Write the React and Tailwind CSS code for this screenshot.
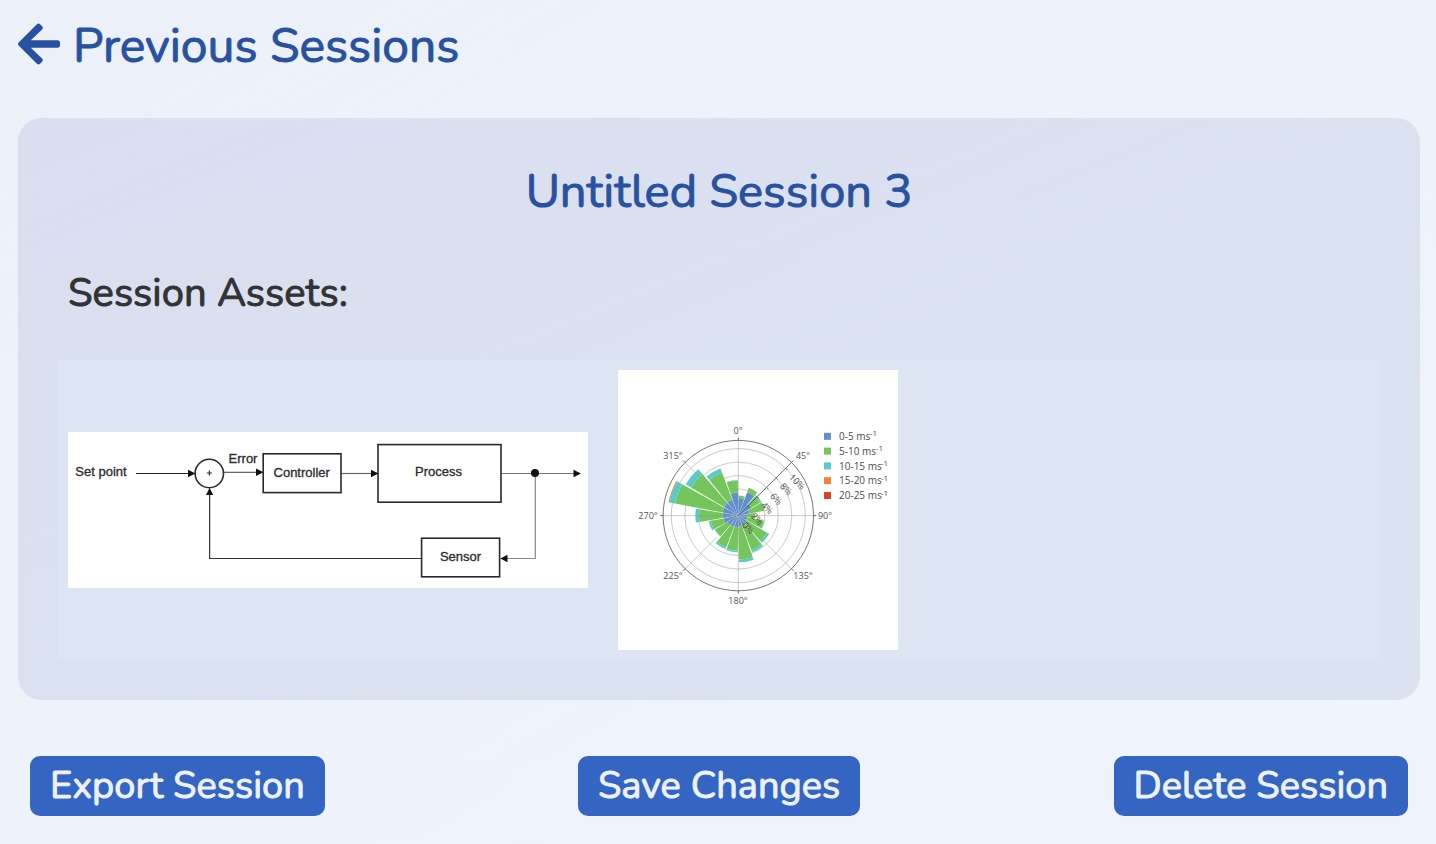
import React from "react";
import { FaArrowLeft } from "react-icons/fa";

const BLUE = "#618fca";
const GREEN = "#74c55b";
const CYAN = "#56cbc9";
const ORANGE = "#f3813a";
const RED = "#d84425";

// Outer radius of each stacked band: blue, green, cyan, orange
const SECTORS = [
  { angle: 10, bands: [17.7, 20] },
  { angle: 30, bands: [25, 29.7] },
  { angle: 50, bands: [15, 25.6, 26.8] },
  { angle: 70, bands: [11.7, 26.3] },
  { angle: 90, bands: [9, 17] },
  { angle: 110, bands: [9, 26, 26.6] },
  { angle: 130, bands: [10, 33.7, 36] },
  { angle: 150, bands: [10.7, 37, 39.3] },
  { angle: 170, bands: [11, 44, 46.7] },
  { angle: 190, bands: [11.7, 35, 36.7] },
  { angle: 210, bands: [12, 33.7, 35.7] },
  { angle: 230, bands: [12.7, 27, 27.6] },
  { angle: 250, bands: [15, 28, 30] },
  { angle: 270, bands: [15.7, 39.3, 43] },
  { angle: 290, bands: [16, 64.3, 70, 71] },
  { angle: 310, bands: [16.7, 55, 61.3] },
  { angle: 330, bands: [17.3, 46, 50.3] },
  { angle: 350, bands: [23, 35, 35.7] },
];

const BAND_COLORS = [BLUE, GREEN, CYAN, ORANGE];
const CX = 120.3;
const CY = 145.6;

function polar(r, deg) {
  const a = (deg * Math.PI) / 180;
  return [CX + r * Math.sin(a), CY - r * Math.cos(a)];
}

function wedge(inner, outer, center) {
  const from = center - 9.2;
  const to = center + 9.2;
  const [x1, y1] = polar(inner, from);
  const [x2, y2] = polar(outer, from);
  const [x3, y3] = polar(outer, to);
  const [x4, y4] = polar(inner, to);
  return `M${x1} ${y1}L${x2} ${y2}A${outer} ${outer} 0 0 1 ${x3} ${y3}L${x4} ${y4}A${inner} ${inner} 0 0 0 ${x1} ${y1}Z`;
}

const DIRECTIONS = [
  { label: "0°", x: 120, y: 64 },
  { label: "45°", x: 185, y: 89 },
  { label: "90°", x: 207, y: 149 },
  { label: "135°", x: 185, y: 209 },
  { label: "180°", x: 120, y: 234 },
  { label: "225°", x: 55, y: 209 },
  { label: "270°", x: 30, y: 149 },
  { label: "315°", x: 55, y: 89 },
];

const PERCENTS = [
  { label: "0%", x: 130, y: 158 },
  { label: "2%", x: 139, y: 149 },
  { label: "4%", x: 149, y: 138 },
  { label: "6%", x: 158, y: 129 },
  { label: "8%", x: 168, y: 119 },
  { label: "10%", x: 179, y: 112 },
];

const LEGEND = [
  { label: "0-5 ms", color: BLUE, supX: 252 },
  { label: "5-10 ms", color: GREEN, supX: 258 },
  { label: "10-15 ms", color: CYAN, supX: 263 },
  { label: "15-20 ms", color: ORANGE, supX: 263 },
  { label: "20-25 ms", color: RED, supX: 263 },
];

function WindRose() {
  return (
    <svg
      viewBox="0 0 280 280"
      role="img"
      aria-label="Wind rose"
      className="h-[280px] w-[280px] shrink-0 bg-white font-['Open_Sans','Noto_Sans',sans-serif]"
    >
      <g fill="none" stroke="#c4c4c4" strokeWidth="0.9">
        {[13.3, 26.7, 40, 53.5, 67].map((r) => (
          <circle key={r} cx={CX} cy={CY} r={r} />
        ))}
      </g>
      {SECTORS.map(({ angle, bands }) =>
        bands.map((r, i) => (
          <path key={`${angle}-${i}`} d={wedge(i ? bands[i - 1] : 0, r, angle)} fill={BAND_COLORS[i]} />
        ))
      )}
      <g stroke="#9a9a9a" strokeOpacity="0.5" strokeWidth="1">
        {[0, 90, 135, 180, 225, 270, 315].map((a) => {
          const [x1, y1] = polar(a % 90 ? 30 : 0, a);
          const [x2, y2] = polar(75, a);
          return <line key={a} x1={x1} y1={y1} x2={x2} y2={y2} />;
        })}
      </g>
      <circle cx={CX} cy={CY} r="75.2" fill="none" stroke="#666" strokeWidth="0.9" />
      <g stroke="#555" strokeWidth="0.9">
        {[0, 45, 90, 135, 180, 225, 270, 315].map((a) => {
          const [x1, y1] = polar(75, a);
          const [x2, y2] = polar(78, a);
          return <line key={a} x1={x1} y1={y1} x2={x2} y2={y2} />;
        })}
        <line x1={CX} y1={CY} x2={CX + 53} y2={CY - 53} />
        {[13.3, 26.7, 40, 53.5, 67].map((r) => {
          const [x, y] = polar(r, 45);
          return <line key={r} x1={x} y1={y} x2={x + 1.6} y2={y + 1.6} />;
        })}
      </g>
      <g fill="#555" fontSize="9" textAnchor="middle">
        {DIRECTIONS.map((d) => (
          <text key={d.label} x={d.x} y={d.y}>
            {d.label}
          </text>
        ))}
      </g>
      <g fill="#444" fontSize="9" textAnchor="middle">
        {PERCENTS.map((p) => (
          <text key={p.label} x={p.x} y={p.y} dy="3" transform={`rotate(45 ${p.x} ${p.y})`}>
            {p.label}
          </text>
        ))}
      </g>
      {LEGEND.map((item, i) => {
        const y = 66.3 + i * 14.8;
        return (
          <g key={item.label} fill="#4c4c4c">
            <rect x="206" y={y - 3.5} width="7" height="7" fill={item.color} />
            <text x="221" y={y + 3.7} fontSize="10">
              {item.label}
            </text>
            <text x={item.supX} y={y} fontSize="8">
              -1
            </text>
          </g>
        );
      })}
    </svg>
  );
}

function ControlLoop() {
  return (
    <svg
      viewBox="0 0 520 156"
      role="img"
      aria-label="Feedback control loop"
      className="h-[156px] w-[520px] shrink-0 bg-white font-['Liberation_Sans',Arial,sans-serif]"
    >
      <g fill="none" stroke="#333" strokeWidth="1.2">
        <path d="M68 41.5H121" stroke="#222" />
        <path d="M156 40.3H189" stroke="#666" />
        <path d="M273 41.5H304" stroke="#666" />
        <path d="M433 41.5H506" stroke="#777" />
        <path d="M467.3 41V126.5H439" stroke="#888" />
        <path d="M353 126.5H141.6V62" />
      </g>
      <g fill="none" stroke="#2a2a2a" strokeWidth="1.6">
        <circle cx="141.3" cy="41.5" r="14.2" />
        <rect x="195.2" y="21.8" width="77.8" height="38.8" />
        <rect x="310" y="12.6" width="123" height="57.6" />
        <rect x="353.6" y="106.2" width="78" height="38.6" />
      </g>
      <g fill="#111">
        <path d="M120 37.7L127.5 41.5L120 45.3Z" />
        <path d="M188 36.6L195.5 40.3L188 44Z" />
        <path d="M303 37.7L310.5 41.5L303 45.3Z" />
        <path d="M505.5 37.7L513 41.5L505.5 45.3Z" />
        <path d="M439.5 122.8L432.3 126.5L439.5 130.2Z" />
        <path d="M138 63L141.6 55.8L145.2 63Z" />
        <circle cx="467" cy="41" r="4" />
      </g>
      <g fill="#2a2a2a" stroke="#2a2a2a" strokeWidth="0.3" fontSize="13" textAnchor="middle">
        <text x="33" y="44">Set point</text>
        <text x="175" y="31">Error</text>
        <text x="233.7" y="45">Controller</text>
        <text x="370.5" y="44">Process</text>
        <text x="392.5" y="129">Sensor</text>
      </g>
      <path d="M138.8 41H144M141.4 38.4V43.6" stroke="#333" strokeWidth="1.2" />
    </svg>
  );
}

function ActionButton({ children }) {
  return (
    <button
      type="button"
      className="rounded-[10px] bg-[#3465c3] px-5 text-[38px] leading-[60px] whitespace-nowrap text-[#edf2fc] [-webkit-text-stroke:1px_currentColor]"
    >
      {children}
    </button>
  );
}

export default function App() {
  return (
    <div className="min-h-screen bg-linear-to-br from-[#ecf0f9] to-[#f0f4fd] pr-4 pb-7 pl-[18px] font-[Nunito,Lato,sans-serif]">
      <header className="flex h-[118px] items-start pt-5">
        <a href="#sessions" className="flex items-start gap-[13px] text-[#2852a0]">
          <FaArrowLeft className="h-12 w-[42px]" aria-hidden="true" />
          <h1 className="text-[48px] leading-[52px] font-normal [-webkit-text-stroke:1px_currentColor]">
            Previous Sessions
          </h1>
        </a>
      </header>

      <main>
        <section className="rounded-[24px] bg-linear-to-br from-[#d9dff0] to-[#dce3f0] p-10">
          <h2 className="text-center text-[47px] leading-[68px] font-normal text-[#2852a0] [-webkit-text-stroke:1px_currentColor]">
            Untitled Session 3
          </h2>
          <h3 className="mt-9 px-[10px] text-[40px] leading-[62px] font-normal text-[#333] [-webkit-text-stroke:1px_currentColor]">
            Session Assets:
          </h3>
          <div className="mt-9 flex items-center gap-[30px] overflow-x-auto bg-[#dee5f2] p-[10px]">
            <ControlLoop />
            <WindRose />
          </div>
        </section>

        <div className="mt-14 flex justify-between px-3">
          <ActionButton>Export Session</ActionButton>
          <ActionButton>Save Changes</ActionButton>
          <ActionButton>Delete Session</ActionButton>
        </div>
      </main>
    </div>
  );
}
